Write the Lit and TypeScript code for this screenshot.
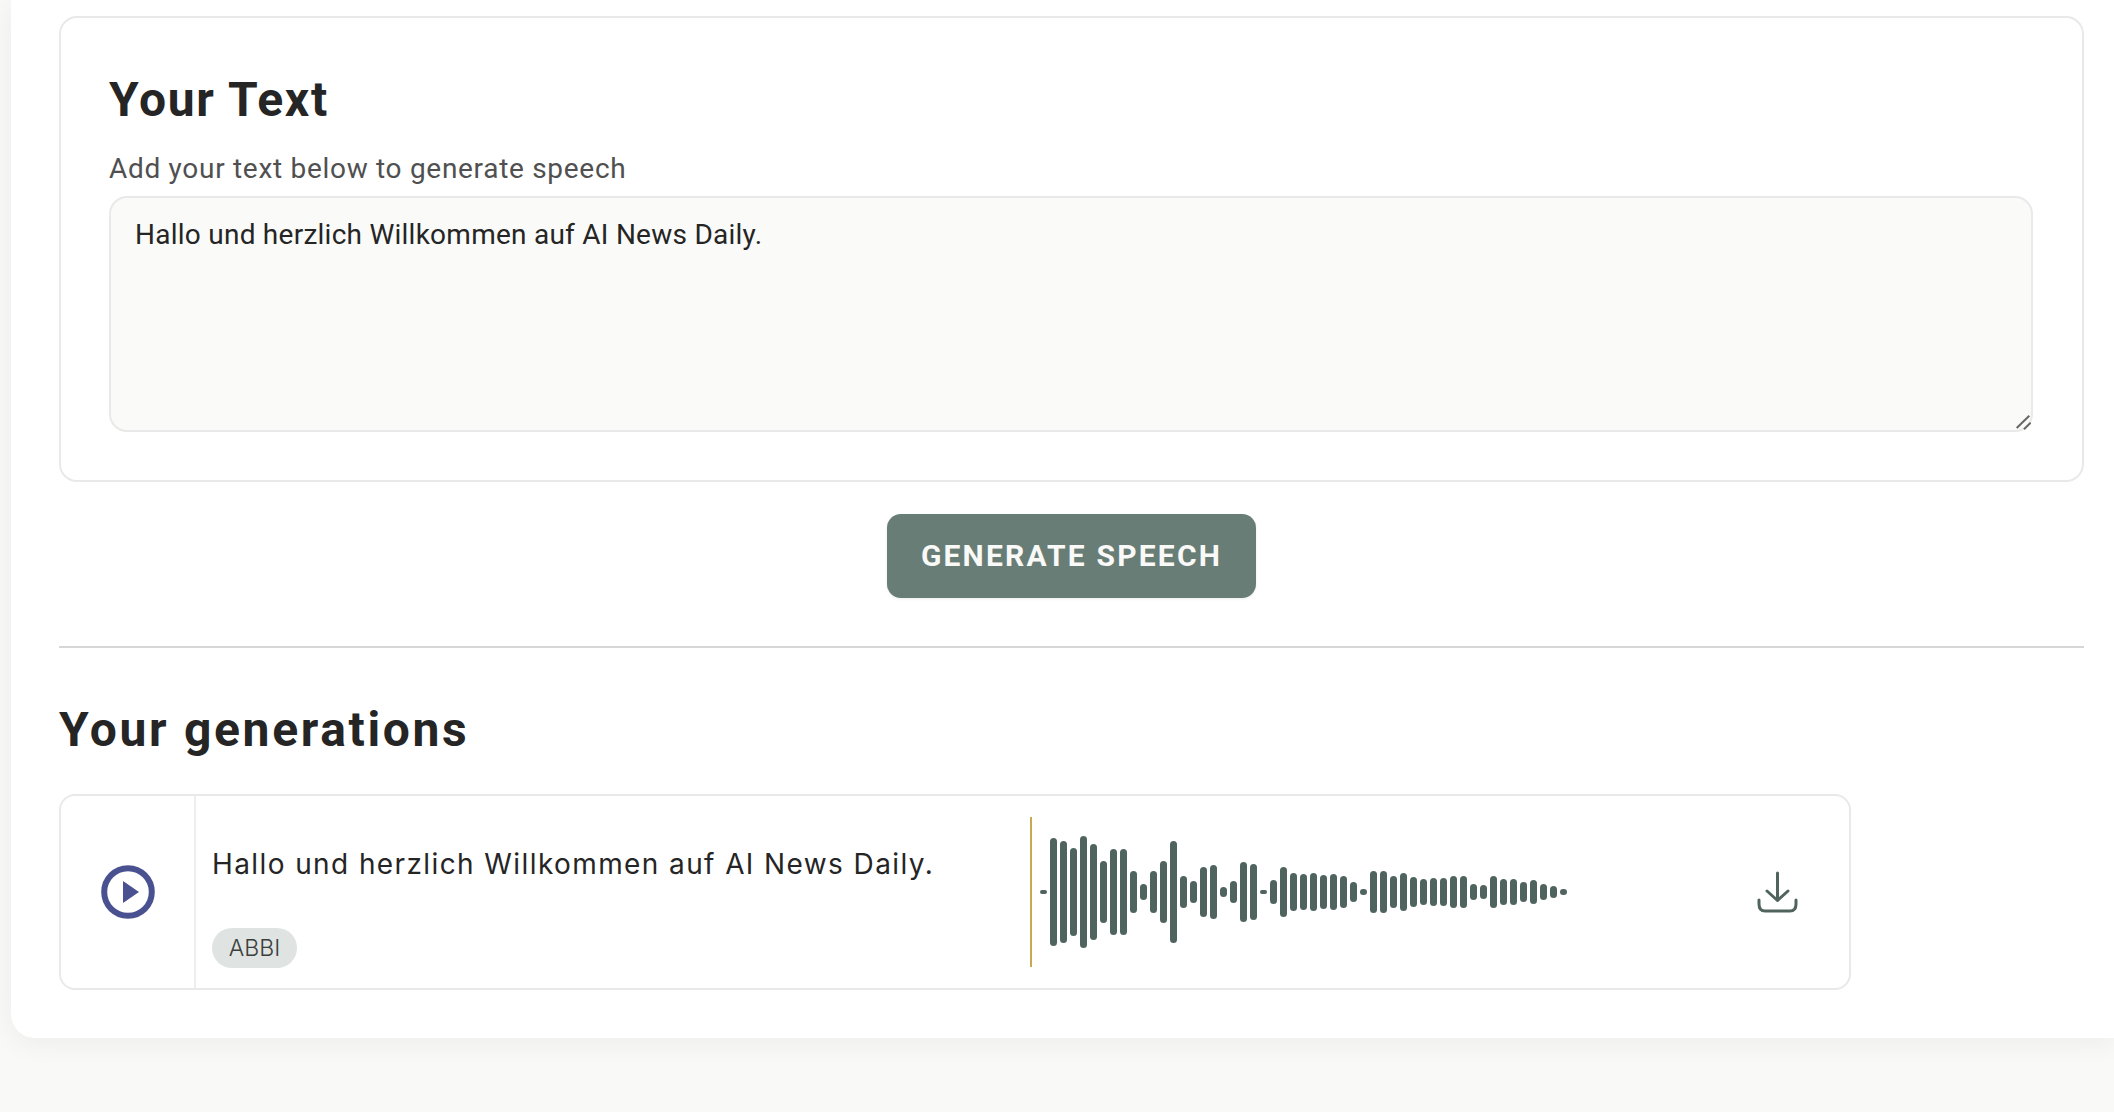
import { LitElement, html, css, svg } from "lit";
import { customElement } from "lit/decorators.js";

const BARS = [4,108,102,88,112,96,62,86,86,42,16,42,62,102,32,22,50,54,10,22,60,56,4,24,50,38,36,38,34,36,32,20,6,42,42,32,38,30,26,28,28,32,32,16,14,32,26,26,20,24,16,12,6];
const TEXT = "Hallo und herzlich Willkommen auf AI News Daily.";

@customElement("app-root")
export class AppRoot extends LitElement {
  static styles = css`
    :host { display: block; height: 1112px; overflow: hidden; background: #f9f9f7; font-family: "Roboto", "Liberation Sans", sans-serif; color: #252525; }
    .panel { margin-left: 11px; height: 1038px; box-sizing: border-box; padding: 16px 30px 0 48px; background: #fff; border-radius: 0 0 0 24px; box-shadow: 0 4px 30px rgba(0,0,0,.06); display: flex; flex-direction: column; }
    .card { box-sizing: border-box; height: 466px; border: 2px solid #e9e9e9; border-radius: 18px; padding: 52px 49px 0 48px; display: flex; flex-direction: column; }
    h2 { margin: 0; font-size: 48px; line-height: 60px; font-weight: 700; letter-spacing: 1.7px; }
    .sub { margin: 22px 0 0; font-size: 28px; line-height: 34px; color: #505050; letter-spacing: .7px; }
    .field { position: relative; margin-top: 10px; }
    textarea { display: block; box-sizing: border-box; width: 100%; height: 236px; padding: 20px 24px; border: 2px solid #e9e9e9; border-radius: 18px; background: #fafaf8; font: 400 28px/34px "Roboto", sans-serif; letter-spacing: .25px; color: #252525; outline: none; resize: none; }
    .grip { position: absolute; right: 2px; bottom: 0; display: block; }
    .btn { align-self: center; margin-top: 32px; box-sizing: border-box; width: 369px; height: 84px; padding: 0 0 1px; border: 0; border-radius: 14px; background: #687d76; color: #f9f9f7; font: 700 30px "Roboto", sans-serif; letter-spacing: 2.2px; box-shadow: 0 1px 3px rgba(0,0,0,.08); }
    hr { margin: 48px 0 0; border: 0; height: 2px; background: #d6d6d6; flex: none; }
    h3 { margin: 52px 0 0; font-size: 48px; line-height: 60px; font-weight: 700; letter-spacing: 2.65px; }
    .item { margin-top: 34px; box-sizing: border-box; width: 1792px; height: 196px; border: 2px solid #e9e9e9; border-radius: 16px; display: flex; align-items: center; }
    .play { box-sizing: border-box; flex: none; width: 135px; height: 100%; border-right: 2px solid #eee; display: flex; align-items: center; justify-content: center; }
    .play svg { display: block; }
    .info { box-sizing: border-box; flex: none; width: 834px; height: 100%; padding: 50px 0 0 16px; display: flex; flex-direction: column; align-items: flex-start; }
    .title { font-family: "Inter", sans-serif; font-size: 28px; line-height: 36px; letter-spacing: 1.4px; color: #252525; }
    .chip { margin-top: 46px; box-sizing: border-box; height: 40px; width: 85px; border-radius: 20px; background: #dfe3e1; color: #3a3f3d; font-family: "Inter", sans-serif; font-size: 23px; font-weight: 300; line-height: 40px; text-align: center; }
    .wave { flex: none; display: flex; align-items: center; gap: 3px; height: 150px; border-left: 2px solid #c9a94f; padding-left: 8px; }
    .wave i { display: block; width: 7px; border-radius: 3.5px; background: #50645f; }
    .dl { margin-left: auto; margin-right: 51px; display: block; }
  `;

  render() {
    return html`
      <div class="panel">
        <section class="card">
          <h2>Your Text</h2>
          <p class="sub">Add your text below to generate speech</p>
          <div class="field">
            <textarea .value=${TEXT}></textarea>
            <svg class="grip" width="20" height="20" viewBox="0 0 20 20" stroke="#666" stroke-width="2">
              <path d="M5.7 16 L18.3 3.7"></path><path d="M13 17.3 L19.7 10.7"></path>
            </svg>
          </div>
        </section>
        <button class="btn">GENERATE SPEECH</button>
        <hr />
        <h3>Your generations</h3>
        <div class="item">
          <div class="play">
            <svg width="54" height="54" viewBox="0 0 54 54">
              <circle cx="27" cy="27" r="23.8" fill="none" stroke="#4a5190" stroke-width="6"></circle>
              <path d="M22 16 L38 27 L22 38 Z" fill="#4a5190"></path>
            </svg>
          </div>
          <div class="info">
            <div class="title">${TEXT}</div>
            <div class="chip">ABBI</div>
          </div>
          <div class="wave">
            ${BARS.map((h) => html`<i style="height:${h}px"></i>`)}
          </div>
          <svg class="dl" width="41" height="42" viewBox="0 0 41 42" fill="none" stroke="#50645d" stroke-width="3" stroke-linecap="round" stroke-linejoin="round">
            ${svg`<path d="M20.5 2 V29"></path><path d="M10 20 L20.5 29.5 L31 20"></path><path d="M2 29 V33 Q2 40 8 40 H33 Q39 40 39 33 V29"></path>`}
          </svg>
        </div>
      </div>
    `;
  }
}
